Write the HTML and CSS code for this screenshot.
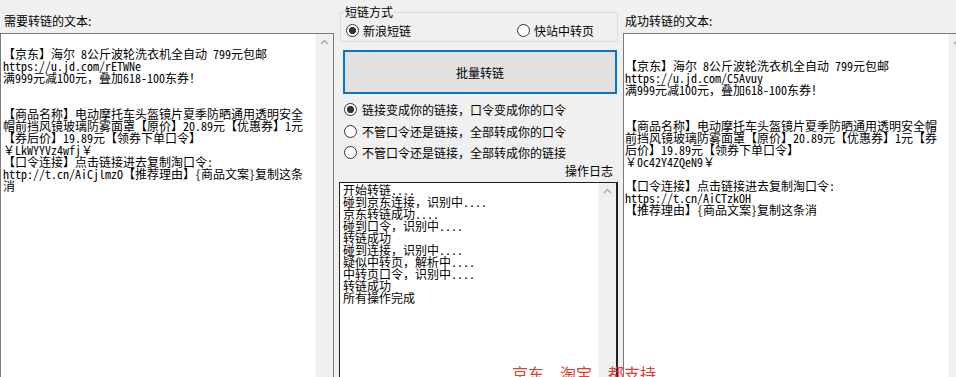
FILE: index.html
```html
<!DOCTYPE html>
<html lang="zh-CN">
<head>
    <meta charset="UTF-8">
    <meta name="viewport" content="width=device-width, initial-scale=1.0">
    <title>批量转链</title>
    <link rel="stylesheet" href="styles.css">
</head>
<body>
    <div class="window">
        <div class="col col-left">
            <div class="caption">需要转链的文本:</div>
            <div class="textbox box-left">
                <div class="text"><br>【京东】海尔 8公斤波轮洗衣机全自动 799元包邮<br>https://u.jd.com/rETWNe<br>满999元减100元，叠加618-100东券！<br><br><br>【商品名称】电动摩托车头盔镜片夏季防晒通用透明安全<br>帽前挡风镜玻璃防雾面罩【原价】20.89元【优惠券】1元<br>【券后价】19.89元【领券下单口令】<br>￥LkWYYVz4wfj￥<br>【口令连接】点击链接进去复制淘口令:<br>http://t.cn/AiCjlmzO【推荐理由】{商品文案}复制这条<br>消</div>
                <div class="vscroll">
                    <svg class="arrow" width="17" height="17" viewBox="0 0 17 17"><path d="M5 10 L8.5 6.5 L12 10" fill="none" stroke="#a8a8a8" stroke-width="1.4"/></svg>
                </div>
            </div>
        </div>

        <div class="col col-mid">
            <fieldset class="group">
                <legend>短链方式</legend>
                <div class="radio-row">
                    <label class="radio checked"><span class="mark"></span>新浪短链</label>
                    <label class="radio"><span class="mark"></span>快站中转页</label>
                </div>
            </fieldset>

            <button class="btn-convert">批量转链</button>

            <div class="modes">
                <label class="radio checked"><span class="mark"></span>链接变成你的链接，口令变成你的口令</label>
                <label class="radio"><span class="mark"></span>不管口令还是链接，全部转成你的口令</label>
                <label class="radio"><span class="mark"></span>不管口令还是链接，全部转成你的链接</label>
            </div>

            <div class="log-title">操作日志</div>
            <div class="textbox box-log">
                <div class="text log-text">开始转链....<br>碰到京东连接，识别中....<br>京东转链成功....<br>碰到口令，识别中....<br>转链成功<br>碰到连接，识别中....<br>疑似中转页，解析中....<br>中转页口令，识别中....<br>转链成功<br>所有操作完成</div>
                <div class="vscroll">
                    <svg class="arrow" width="17" height="17" viewBox="0 0 17 17"><path d="M5 10 L8.5 6.5 L12 10" fill="none" stroke="#a8a8a8" stroke-width="1.4"/></svg>
                </div>
            </div>
        </div>

        <div class="col col-right">
            <div class="caption">成功转链的文本:</div>
            <div class="textbox box-right">
                <div class="text"><br><br>【京东】海尔 8公斤波轮洗衣机全自动 799元包邮<br>https://u.jd.com/C5Avuy<br>满999元减100元，叠加618-100东券！<br><br><br>【商品名称】电动摩托车头盔镜片夏季防晒通用透明安全帽<br>前挡风镜玻璃防雾面罩【原价】20.89元【优惠券】1元【券<br>后价】19.89元【领券下单口令】<br>￥0c42Y4ZQeN9￥<br><br>【口令连接】点击链接进去复制淘口令:<br>https://t.cn/AiCTzkOH<br>【推荐理由】{商品文案}复制这条消</div>
                <div class="vscroll">
                    <svg class="arrow" width="17" height="17" viewBox="0 0 17 17"><path d="M5 10 L8.5 6.5 L12 10" fill="none" stroke="#a8a8a8" stroke-width="1.4"/></svg>
                </div>
            </div>
        </div>

        <div class="tip">京东、淘宝、都支持</div>
    </div>
</body>
</html>
```

FILE: styles.css
```css
body {
    margin: 0;
    padding: 0;
    background-color: #f0f0f0;
    font-family: "Noto Sans CJK SC", sans-serif;
    font-size: 12px;
    color: #000;
    overflow: hidden;
}
.window {
    position: relative;
    display: flex;
    height: 400px;
    width: 980px;
}
.col {
    display: flex;
    flex-direction: column;
    box-sizing: border-box;
}
.col-left {
    width: 334px;
}
.col-mid {
    width: 289px;
    padding-top: 4px;
}
.col-right {
    width: 344px;
}
.caption {
    box-sizing: border-box;
    height: 33px;
    padding-top: 13px;
    line-height: 16px;
    white-space: nowrap;
}
.col-left .caption {
    padding-left: 4px;
}
.col-right .caption {
    padding-left: 2px;
}

/* text boxes */
.textbox {
    display: flex;
    flex: 1;
    background-color: #fff;
    border: 1px solid #7a7a7a;
    min-height: 0;
}
.textbox .text {
    flex: 1;
    padding: 2px 0 0 2px;
    font-family: "Noto Sans Mono CJK SC", "Noto Sans CJK SC", monospace;
    font-size: 12px;
    line-height: 12px;
    white-space: nowrap;
    overflow: hidden;
}
.box-right .text {
    padding-left: 1px;
}
.vscroll {
    width: 17px;
    flex: none;
    background-color: #efefef;
    border-left: 1px solid #f7f7f7;
}
.vscroll .arrow {
    display: block;
}
.box-log {
    margin-left: 5px;
    width: 279px;
    flex: 1;
    box-sizing: border-box;
    border: 1px solid #222;
    border-right-width: 2px;
    margin-top: 4px;
}
.box-log .text {
    padding: 1px 0 0 3px;
    line-height: 12px;
}

/* group box */
.group {
    box-sizing: border-box;
    margin: 0 0 0 6px;
    width: 278px;
    min-width: 0;
    padding: 2px 23px 3px 5px;
    border: 1px solid #dcdcdc;
}
.group legend {
    padding: 0 1px;
    margin-left: -2px;
    line-height: 16px;
}
.radio-row {
    display: flex;
    justify-content: space-between;
    height: 16px;
    align-items: center;
}
.radio {
    display: flex;
    align-items: center;
    white-space: nowrap;
}
.radio .mark {
    box-sizing: border-box;
    width: 13px;
    height: 13px;
    margin-right: 4px;
    border: 1px solid #333;
    border-radius: 50%;
    background-color: #fff;
}
.radio.checked .mark {
    background: radial-gradient(circle, #333 0, #333 3.3px, #fff 3.9px);
}

/* button */
.btn-convert {
    margin: 8px 0 0 9px;
    width: 274px;
    height: 44px;
    box-sizing: border-box;
    border: 2px solid #0078d7;
    background-color: #e1e1e1;
    font-family: "Noto Sans CJK SC", sans-serif;
    font-size: 12px;
    color: #000;
    padding: 0;
}

/* mode options */
.modes {
    margin-top: 5px;
    padding-left: 10px;
}
.modes .radio {
    height: 21.5px;
}
.modes .radio .mark {
    margin-right: 5px;
}
.log-title {
    height: 14px;
    line-height: 14px;
    text-align: right;
    padding-right: 10px;
}

.tip {
    position: absolute;
    left: 512px;
    top: 364px;
    font-size: 16px;
    line-height: 18px;
    color: #e33b36;
    white-space: nowrap;
}
```
